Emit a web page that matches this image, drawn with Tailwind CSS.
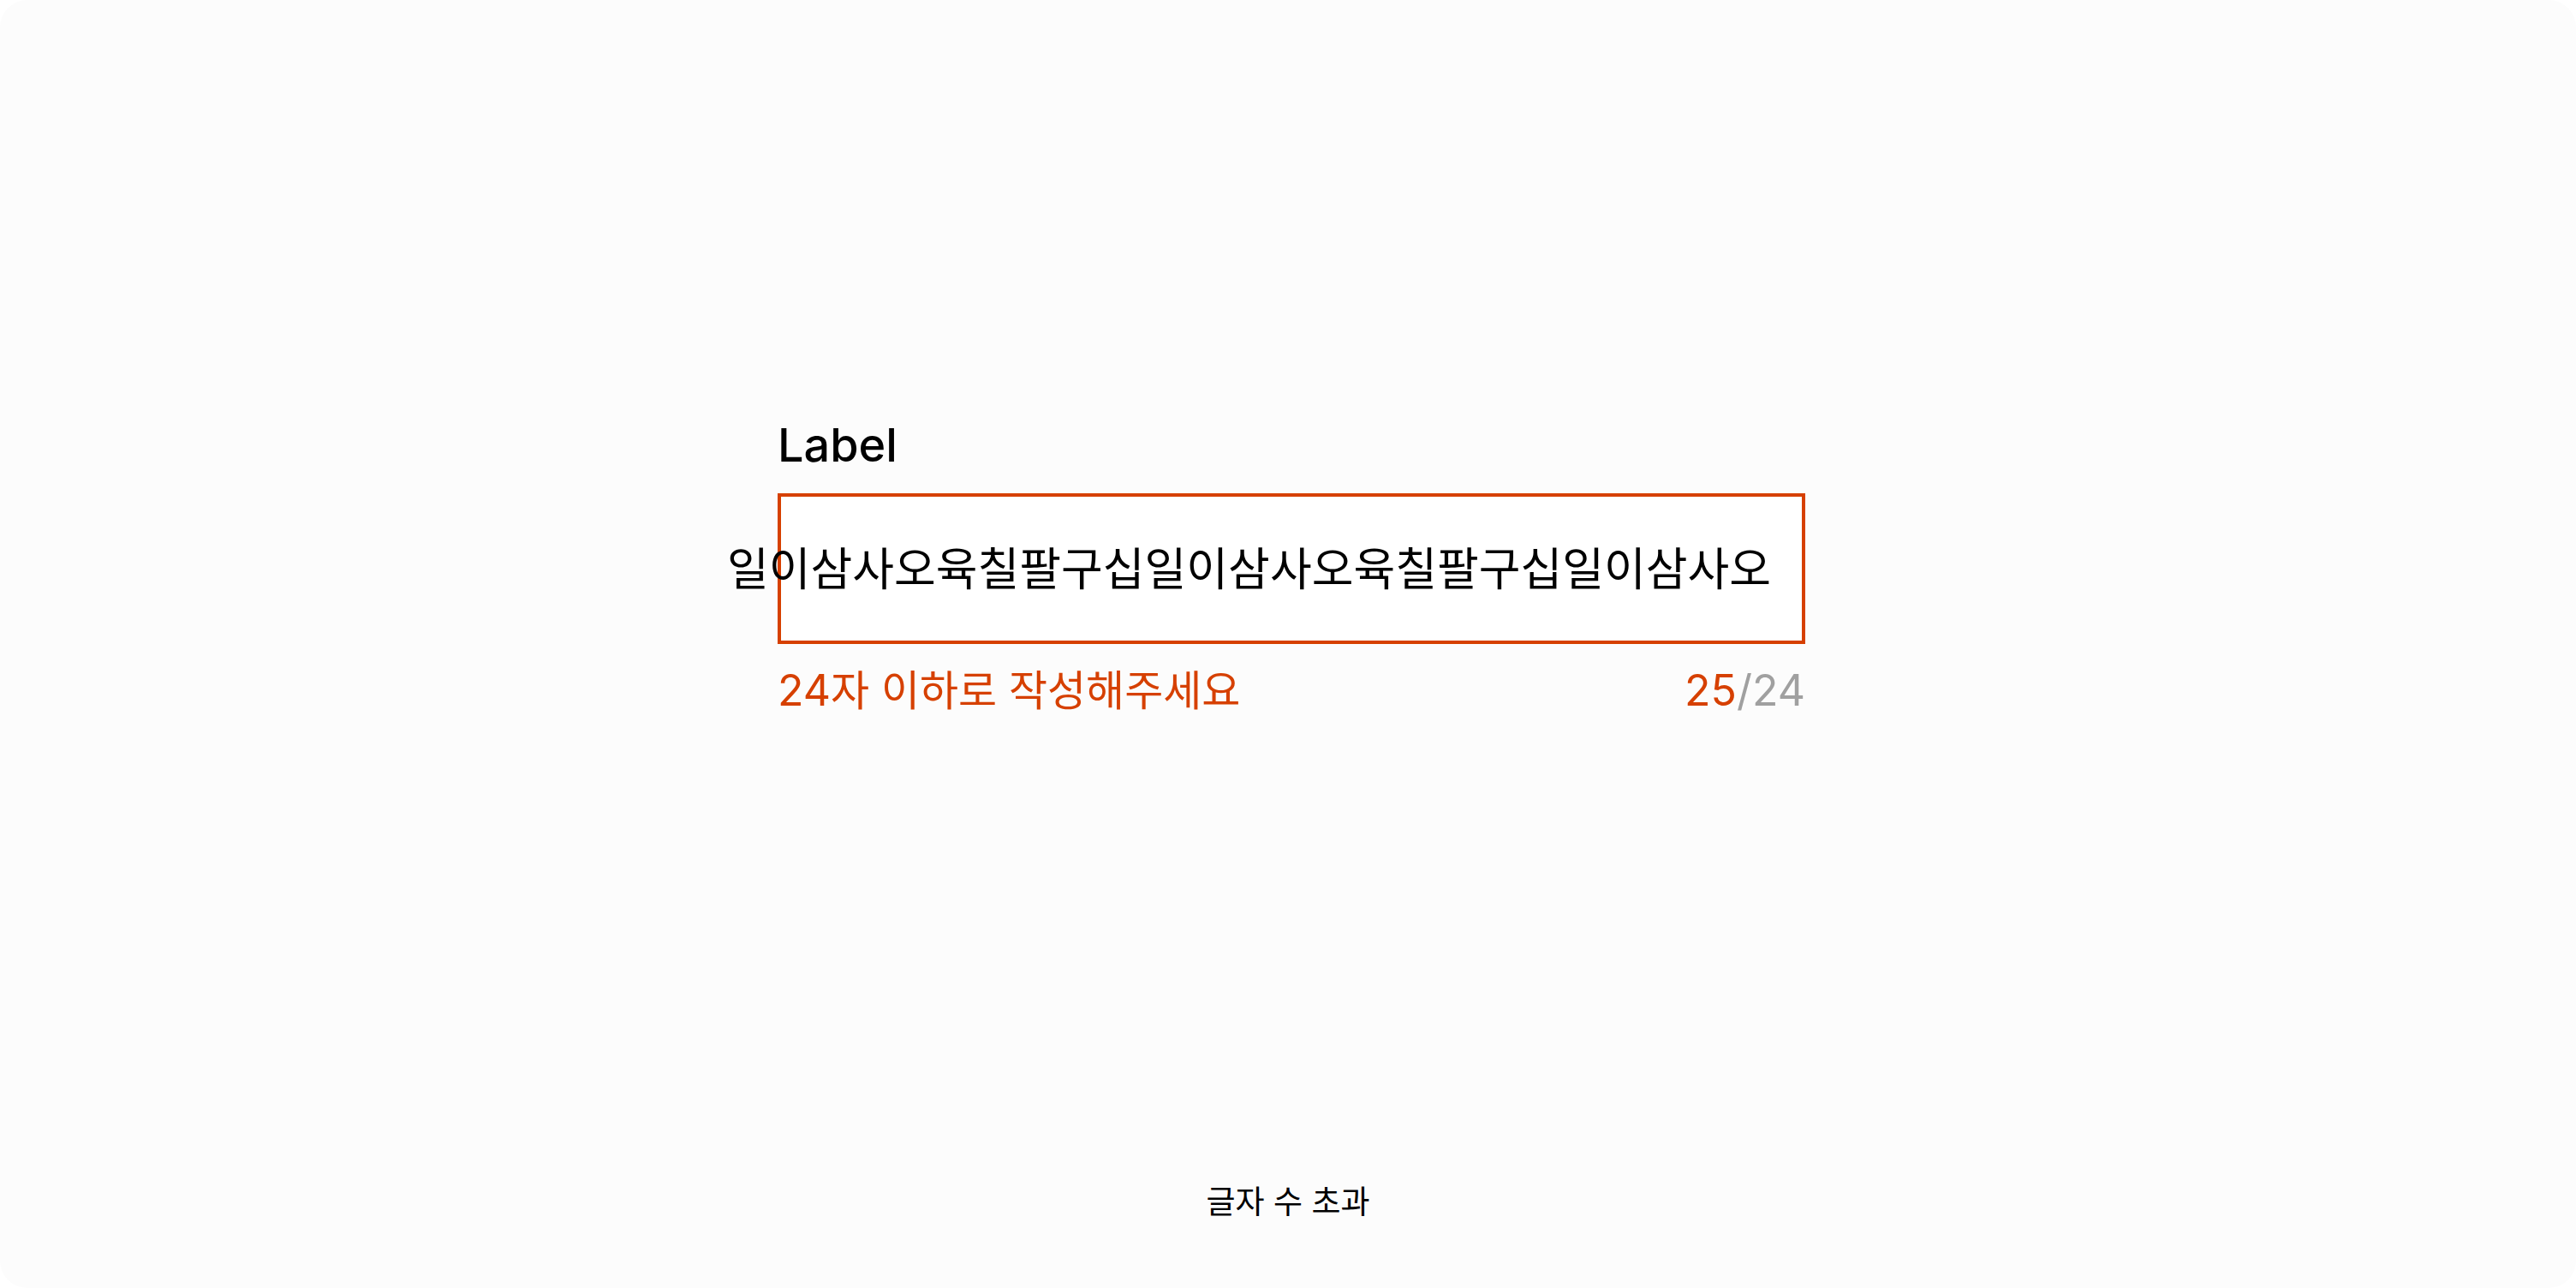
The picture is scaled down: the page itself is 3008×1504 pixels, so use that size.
<!DOCTYPE html>
<html lang="ko">
<head>
<meta charset="utf-8">
<meta name="viewport" content="width=device-width, initial-scale=1">
<title>글자 수 초과</title>
<script src="https://cdn.jsdelivr.net/npm/@tailwindcss/browser@4"></script>
</head>
<body class="bg-white text-black font-['Inter','Noto_Sans_CJK_KR',sans-serif]">
<figure class="flex min-h-screen flex-col rounded-[32px] bg-[#fcfcfc]">
  <div class="flex flex-1 items-center justify-center pb-[50px] pl-2">
    <div class="flex w-full max-w-[1200px] flex-col gap-5">
      <label for="field" class="text-[54px]/[72px] font-medium">Label</label>
      <div class="flex h-44 items-center justify-end border-4 border-[#d64000] bg-white pt-0.5 pr-9">
        <input id="field" type="text" value="일이삼사오육칠팔구십일이삼사오육칠팔구십일이삼사오" aria-invalid="true" aria-describedby="field-error field-count" class="-ml-24 w-full min-w-[1240px] shrink-0 bg-transparent text-right text-[53px]/[80px] outline-none">
      </div>
      <div class="flex justify-between text-[50px]/[68px]">
        <p id="field-error" class="text-[#d64000]">24<span class="text-[49px]">자 이하로 작성해주세요</span></p>
        <p id="field-count" class="text-[#a0a0a0]"><span class="text-[#d64000]">25</span>/24</p>
      </div>
    </div>
  </div>
  <figcaption class="pb-[70px] text-center text-[37px]/[60px]">글자 수 초과</figcaption>
</figure>
</body>
</html>
